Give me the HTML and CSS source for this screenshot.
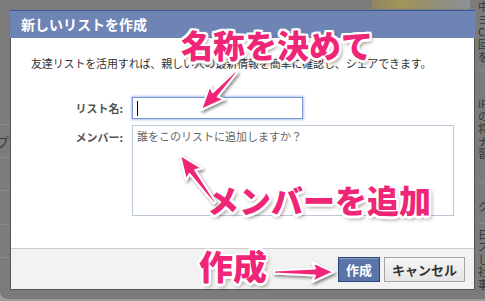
FILE: index.html
```html
<!DOCTYPE html>
<html lang="ja">
<head>
    <meta charset="UTF-8">
    <link rel="stylesheet" href="styles.css">
    <title>新しいリストを作成</title>
</head>
<body>
    <div class="screen">
        <!-- page behind the overlay -->
        <div class="frame-top"><div class="bg-photo"></div></div>

        <div class="strip strip-left">
            <div class="bg-row"><span class="bg-char">プ</span></div>
            <div class="bg-row"></div>
            <div class="bg-row"></div>
            <div class="bg-row"></div>
            <div class="bg-row"></div>
        </div>

        <div class="dialog">
            <div class="dialog-title">新しいリストを作成</div>
            <div class="dialog-body">
                <p class="intro">友達リストを活用すれば、親しい人の最新情報を簡単に確認し、シェアできます。</p>
                <div class="form">
                    <label class="form-label">リスト名:</label>
                    <div class="text-field"><span class="caret"></span></div>
                    <label class="form-label form-label-top">メンバー:</label>
                    <div class="text-area">誰をこのリストに追加しますか？</div>
                </div>
            </div>
            <div class="dialog-footer">
                <button class="btn btn-primary">作成</button>
                <button class="btn">キャンセル</button>
            </div>
        </div>

        <div class="strip strip-right">
            <div class="side-block side-first">
                <span>中</span><span>ヨ</span><span>C</span><span>回</span><span>を</span>
            </div>
            <div class="side-block side-second">
                <span>iP</span><span>の</span><span>将</span><span>ナ</span><span>習世</span>
            </div>
            <div class="side-block side-third">
                <span>ク</span>
            </div>
            <div class="side-block side-fourth">
                <span>日</span><span>ス</span><span>し</span><span>社</span><span>事</span>
            </div>
        </div>

        <div class="frame-bottom"></div>
    </div>

    <!-- annotations drawn over the screenshot -->
    <div class="note note-name">名称を決めて</div>
    <div class="note note-member">メンバーを追加</div>
    <div class="note note-create">作成</div>

    <svg class="arrows" width="485" height="301" viewBox="0 0 485 301">
        <defs>
            <filter id="shade" x="-20%" y="-20%" width="140%" height="140%">
                <feDropShadow dx="1.5" dy="2" stdDeviation="1.5" flood-color="#000" flood-opacity="0.45"/>
            </filter>
        </defs>
        <g class="arrow" filter="url(#shade)">
            <polygon points="0,0 -24,-10 -21,-3.5 -52,-1.2 -52,1.2 -21,3.5 -24,10" transform="translate(201 110) rotate(132.6)"/>
            <polygon points="0,0 -24,-10 -21,-3.5 -59,-1.2 -59,1.2 -21,3.5 -24,10" transform="translate(180 155) rotate(-126.1)"/>
            <polygon points="0,0 -22,-10 -19,-3.5 -60,-1.5 -60,1.5 -19,3.5 -22,10" transform="translate(334 272)"/>
        </g>
    </svg>
</body>
</html>
```

FILE: styles.css
```css
body {
    margin: 0;
    background: #9b9b9b;
    font-family: "Noto Sans CJK JP", sans-serif;
    position: relative;
    width: 485px;
    height: 301px;
    overflow: hidden;
}
.screen {
    display: grid;
    grid-template-columns: 10px 465px 10px;
    grid-template-rows: 10px 280px 9px;
    background: #7b7b7b;
    border-bottom-left-radius: 8px;
}
.frame-top {
    grid-column: 1 / 4;
    display: flex;
}
.bg-photo {
    margin-left: 372px;
    width: 98px;
    height: 9px;
    background: linear-gradient(90deg, #8f8560, #a39659 30%, #948d73 60%, #8b9198);
}
.frame-bottom {
    grid-column: 1 / 4;
}
.strip {
    overflow: hidden;
    font-size: 11px;
    color: #333;
}
.strip-left {
    display: flex;
    flex-direction: column;
    padding-top: 114px;
}
.bg-row {
    height: 37px;
    border-top: 1px solid #8a8a8a;
}
.bg-char {
    display: block;
    margin-left: -4px;
    margin-top: 10px;
    font-size: 13px;
    line-height: 14px;
    color: #3a3a3a;
}
.strip-right {
    display: flex;
    flex-direction: column;
    padding-left: 3px;
    margin-top: -10px;
    white-space: nowrap;
}
.side-block {
    display: flex;
    flex-direction: column;
    line-height: 12.5px;
}
.side-first {
    height: 71px;
    border-bottom: 1px solid #8a8a8a;
}
.side-second {
    padding-top: 26px;
    height: 86px;
    border-bottom: 1px solid #8a8a8a;
}
.side-third {
    padding-top: 17px;
    height: 23px;
    border-bottom: 1px solid #8a8a8a;
}
.side-fourth {
    padding-top: 4px;
}

/* dialog */
.dialog {
    display: flex;
    flex-direction: column;
    background: #fff;
    border: 1px solid #555;
    border-top: none;
}
.dialog-title {
    height: 27px;
    background: #6d84b4;
    border-top: 1px solid #3b5998;
    margin: 0 -1px;
    padding: 0 11px;
    color: #fff;
    font-size: 14px;
    font-weight: bold;
    line-height: 27px;
}
.dialog-body {
    height: 210px;
    padding: 18px 20px 0;
    box-sizing: border-box;
}
.intro {
    margin: 0;
    font-size: 11px;
    line-height: 14px;
    color: #333;
    letter-spacing: -0.15px;
}
.form {
    display: grid;
    grid-template-columns: 92px 322px;
    column-gap: 9px;
    row-gap: 6px;
    margin-top: 27px;
}
.form-label {
    justify-self: end;
    align-self: center;
    font-size: 11px;
    font-weight: bold;
    line-height: 14px;
    color: #555;
}
.form-label-top {
    align-self: start;
    padding-top: 5px;
}
.text-field {
    width: 171px;
    height: 22px;
    box-sizing: border-box;
    border: 1px solid #7a96cf;
    box-shadow: 0 0 2px 1px rgba(109, 150, 230, 0.55);
    padding: 3px 4px;
    display: flex;
}
.caret {
    width: 1px;
    height: 15px;
    background: #000;
}
.text-area {
    height: 91px;
    box-sizing: border-box;
    border: 1px solid #bdc7d8;
    padding: 2px 4px;
    font-size: 11px;
    line-height: 16px;
    color: #666;
}
.dialog-footer {
    height: 41px;
    box-sizing: border-box;
    background: #f2f2f2;
    border-top: 1px solid #ccc;
    display: flex;
    justify-content: flex-end;
    gap: 4px;
    padding: 8px 9px 0 0;
}
.btn {
    height: 25px;
    padding: 0 7px;
    font-family: inherit;
    font-size: 13px;
    font-weight: bold;
    line-height: 23px;
    color: #333;
    background: linear-gradient(#f5f5f5, #e6e6e6);
    border: 1px solid #a5a5a5;
    border-radius: 0;
}
.btn-primary {
    color: #fff;
    background: #5b74a8;
    border-color: #29447e;
    box-shadow: inset 0 1px 0 #8a9cc2;
}

/* annotations */
.note {
    position: absolute;
    font-weight: 900;
    line-height: 1;
    color: #ef2577;
    white-space: nowrap;
    text-shadow:
        -2px -2px 0 #fff, 2px -2px 0 #fff, -2px 2px 0 #fff, 2px 2px 0 #fff,
        0 -2.5px 0 #fff, 0 2.5px 0 #fff, -2.5px 0 0 #fff, 2.5px 0 0 #fff,
        2px 3px 4px rgba(0, 0, 0, 0.55);
}
.note-name {
    left: 181px;
    top: 28px;
    font-size: 32px;
}
.note-member {
    left: 207px;
    top: 183px;
    font-size: 32px;
}
.note-create {
    left: 199px;
    top: 249px;
    font-size: 34px;
}
.arrows {
    position: absolute;
    left: 0;
    top: 0;
    pointer-events: none;
}
.arrow polygon {
    fill: #ef2577;
    stroke: #fff;
    stroke-width: 2;
    stroke-linejoin: round;
}
```
